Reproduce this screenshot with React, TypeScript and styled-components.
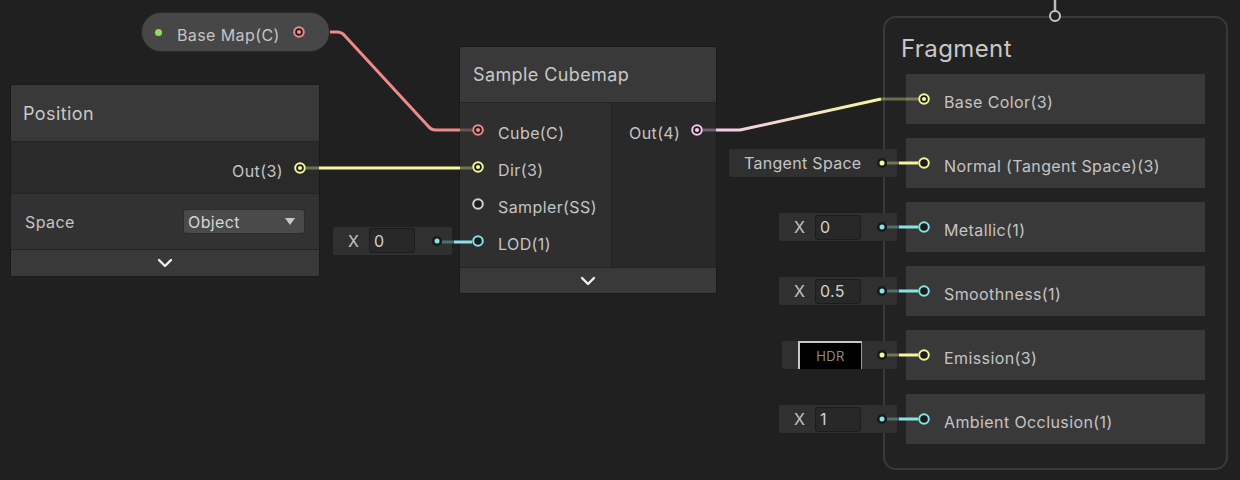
import React from "react";
import styled, { createGlobalStyle } from "styled-components";

const Global = createGlobalStyle`
  html, body { margin: 0; padding: 0; background: #202020; }
  body { font-family: Inter, "Noto Sans", sans-serif; color: #c4c4c4; overflow: hidden; letter-spacing: 0.4px; }
  * { box-sizing: border-box; }
`;

const COL = {
  red: "#f08a8a",
  yellow: "#f4f79a",
  cyan: "#84e4e7",
  pink: "#f6c6ee",
  gray: "#d2d2d2",
  green: "#92dc5c",
};

const Canvas = styled.div`
  position: relative;
  width: 1240px;
  height: 480px;
  overflow: hidden;
  background: #202020;
`;

const Wires = styled.svg`
  position: absolute;
  inset: 0;
  pointer-events: none;
  z-index: 5;
`;

const Node = styled.div<{ $x: number; $y: number; $w: number }>`
  position: absolute;
  left: ${(p) => p.$x}px;
  top: ${(p) => p.$y}px;
  width: ${(p) => p.$w}px;
  display: flex;
  flex-direction: column;
  background: #2a2a2a;
  box-shadow: 0 0 0 1px #1a1a1a;
`;

const Header = styled.div<{ $pad: number; $h: number }>`
  height: ${(p) => p.$h}px;
  display: flex;
  align-items: center;
  padding-left: ${(p) => p.$pad}px;
  background: #393939;
  color: #c8c8c8;
  font-size: 18px;
  border-bottom: 1px solid #242424;
`;

const Label = styled.span<{ $drop?: number }>`
  margin-top: ${(p) => p.$drop ?? 6}px;
  white-space: nowrap;
`;

const OutRow = styled.div`
  height: 52px;
  display: flex;
  align-items: center;
  justify-content: flex-end;
  gap: 11px;
  padding-right: 13px;
  background: #2a2a2a;
  font-size: 16px;
  border-bottom: 1px solid #242424;
`;

const FieldRow = styled.div`
  height: 56px;
  display: flex;
  align-items: center;
  justify-content: space-between;
  padding: 0 14px;
  background: #323232;
  font-size: 16px;
  border-bottom: 1px solid #242424;
`;

const Dropdown = styled.div`
  width: 122px;
  height: 25px;
  display: flex;
  align-items: center;
  justify-content: space-between;
  padding: 0 9px 0 4px;
  background: #4a4a4a;
  border: 1px solid #2c2c2c;
  border-radius: 3px;
  color: #d4d4d4;
  font-size: 16px;
`;

const Caret = styled.span`
  width: 0;
  height: 0;
  border-left: 5.5px solid transparent;
  border-right: 5.5px solid transparent;
  border-top: 7px solid #c8c8c8;
`;

const Collapse = styled.div<{ $h: number }>`
  height: ${(p) => p.$h}px;
  display: flex;
  align-items: center;
  justify-content: center;
  background: #393939;
`;

const Body = styled.div`
  height: 165px;
  display: flex;
  border-bottom: 1px solid #242424;
`;

const Inputs = styled.div`
  flex: none;
  width: 152px;
  display: flex;
  flex-direction: column;
  padding-top: 8px;
  background: #2f2f2f;
  border-right: 1px solid #252525;
`;

const Outputs = styled.div`
  flex: 1;
  min-width: 0;
  display: flex;
  flex-direction: column;
  padding-top: 8px;
  background: #292929;
`;

const SlotRow = styled.div<{ $out?: boolean }>`
  position: relative;
  height: 37px;
  display: flex;
  align-items: center;
  gap: ${(p) => (p.$out ? 0 : 14)}px;
  padding: ${(p) => (p.$out ? "0 13px 0 17px" : "0 0 0 12px")};
  justify-content: ${(p) => (p.$out ? "space-between" : "flex-start")};
  font-size: 16px;
`;

const PropertyPill = styled.div`
  position: absolute;
  left: 141px;
  top: 12px;
  width: 189px;
  height: 40px;
  display: flex;
  align-items: center;
  padding: 0 0 0 13px;
  background: #474747;
  border: 1px solid #2a2a2a;
  border-radius: 20px;
  font-size: 16px;
  z-index: 6;
`;

const ExposedDot = styled.span`
  width: 7px;
  height: 7px;
  border-radius: 50%;
  background: ${COL.green};
  margin-right: 15px;
`;

const PillLabel = styled(Label)`
  margin-right: 13px;
`;

const Fragment = styled.div`
  position: absolute;
  left: 883px;
  top: 16px;
  width: 345px;
  height: 454px;
  display: flex;
  flex-direction: column;
  border: 2px solid #393939;
  border-radius: 13px;
  background: #222222;
`;

const FragTitle = styled.div`
  height: 56px;
  display: flex;
  align-items: center;
  padding: 4px 0 0 16px;
  font-size: 24px;
  color: #c8c8c8;
`;

const BlockList = styled.div`
  display: flex;
  flex-direction: column;
  gap: 14px;
  padding: 0 21px;
`;

const Block = styled.div`
  position: relative;
  height: 50px;
  display: flex;
  align-items: center;
  gap: 14px;
  padding-left: 12px;
  background: #393939;
  font-size: 16px;
`;

const Inline = styled.div<{ $w: number; $gap: number }>`
  position: absolute;
  right: calc(100% + ${(p) => p.$gap}px);
  top: 50%;
  transform: translateY(-50%);
  width: ${(p) => p.$w}px;
  height: 28px;
  display: flex;
  align-items: center;
  padding: 0 10px 0 15px;
  background: #303030;
  border-radius: 2px;
  font-size: 16px;
  letter-spacing: 0.3px;
  z-index: 3;
`;

const XLabel = styled.span`
  width: 21px;
  color: #c4c4c4;
`;

const NumField = styled.div`
  width: 46px;
  height: 25px;
  display: flex;
  align-items: center;
  padding-left: 4px;
  background: #282828;
  border: 1px solid #1c1c1c;
  border-radius: 3px;
  color: #d2d2d2;
`;

const Swatch = styled.div`
  width: 64px;
  height: 28px;
  margin-left: 1px;
  display: flex;
  align-items: center;
  justify-content: center;
  background: #000;
  border-left: 2px solid #c8c8c8;
  border-top: 2px solid #c8c8c8;
  border-right: 1px solid #9a9a9a;
  color: #8a8a8a;
  font-size: 13px;
`;

const PushRight = styled.span`
  margin-left: auto;
  display: flex;
`;

const PortSvg = styled.svg`
  flex: none;
  display: block;
`;

const Port = ({ color, filled }: { color: string; filled?: boolean }) => (
  <PortSvg width="12" height="12" viewBox="0 0 12 12">
    <circle cx="6" cy="6" r="4.8" fill="#1c1c1c" stroke={color} strokeWidth="2" />
    {filled && <circle cx="6" cy="6" r="2.1" fill={color} />}
  </PortSvg>
);

const Dot = ({ color }: { color: string }) => (
  <PortSvg width="10" height="10" viewBox="0 0 10 10">
    <circle cx="5" cy="5" r="5" fill="#1a1a1a" />
    <circle cx="5" cy="5" r="2.5" fill={color} />
  </PortSvg>
);

const Chevron = () => (
  <PortSvg width="16" height="10" viewBox="0 0 16 10">
    <path d="M2 2 L8 8 L14 2" fill="none" stroke="#f0f0f0" strokeWidth="2.4" strokeLinecap="round" strokeLinejoin="round" />
  </PortSvg>
);

const XInline = ({ value, gap = 9, w = 118 }: { value: string; gap?: number; w?: number }) => (
  <Inline $w={w} $gap={gap}>
    <XLabel>X</XLabel>
    <NumField>{value}</NumField>
    <PushRight>
      <Dot color={COL.cyan} />
    </PushRight>
  </Inline>
);

const stubs: [number, string][] = [
  [163, COL.yellow],
  [227, COL.cyan],
  [291, COL.cyan],
  [355, COL.yellow],
  [419, COL.cyan],
];

export default function App() {
  return (
    <Canvas>
      <Global />

      <PropertyPill>
        <ExposedDot />
        <PillLabel>Base Map(C)</PillLabel>
        <Port color={COL.red} filled />
      </PropertyPill>

      <Node $x={11} $y={85} $w={308}>
        <Header $pad={12} $h={57}>Position</Header>
        <OutRow>
          <Label>Out(3)</Label>
          <Port color={COL.yellow} filled />
        </OutRow>
        <FieldRow>
          <span>Space</span>
          <Dropdown>
            <span>Object</span>
            <Caret />
          </Dropdown>
        </FieldRow>
        <Collapse $h={26}>
          <Chevron />
        </Collapse>
      </Node>

      <Node $x={460} $y={47} $w={256}>
        <Header $pad={13} $h={56}>Sample Cubemap</Header>
        <Body>
          <Inputs>
            <SlotRow>
              <Port color={COL.red} filled />
              <Label>Cube(C)</Label>
            </SlotRow>
            <SlotRow>
              <Port color={COL.yellow} filled />
              <Label>Dir(3)</Label>
            </SlotRow>
            <SlotRow>
              <Port color={COL.gray} />
              <Label>Sampler(SS)</Label>
            </SlotRow>
            <SlotRow>
              <XInline value="0" gap={8} w={119} />
              <Port color={COL.cyan} />
              <Label>LOD(1)</Label>
            </SlotRow>
          </Inputs>
          <Outputs>
            <SlotRow $out>
              <Label>Out(4)</Label>
              <Port color={COL.pink} filled />
            </SlotRow>
          </Outputs>
        </Body>
        <Collapse $h={25}>
          <Chevron />
        </Collapse>
      </Node>

      <Fragment>
        <FragTitle>Fragment</FragTitle>
        <BlockList>
          <Block>
            <Port color={COL.yellow} filled />
            <Label $drop={5}>Base Color(3)</Label>
          </Block>
          <Block>
            <Inline $w={168} $gap={9}>
              <span>Tangent Space</span>
              <PushRight>
                <Dot color={COL.yellow} />
              </PushRight>
            </Inline>
            <Port color={COL.yellow} />
            <Label $drop={5}>Normal (Tangent Space)(3)</Label>
          </Block>
          <Block>
            <XInline value="0" />
            <Port color={COL.cyan} />
            <Label $drop={5}>Metallic(1)</Label>
          </Block>
          <Block>
            <XInline value="0.5" />
            <Port color={COL.cyan} />
            <Label $drop={5}>Smoothness(1)</Label>
          </Block>
          <Block>
            <Inline $w={115} $gap={9}>
              <Swatch>HDR</Swatch>
              <PushRight>
                <Dot color={COL.yellow} />
              </PushRight>
            </Inline>
            <Port color={COL.yellow} />
            <Label $drop={5}>Emission(3)</Label>
          </Block>
          <Block>
            <XInline value="1" />
            <Port color={COL.cyan} />
            <Label $drop={5}>Ambient Occlusion(1)</Label>
          </Block>
        </BlockList>
      </Fragment>

      <Wires width="1240" height="480" viewBox="0 0 1240 480">
        <defs>
          <linearGradient id="pk" gradientUnits="userSpaceOnUse" x1="716" y1="0" x2="881" y2="0">
            <stop offset="0" stopColor={COL.pink} />
            <stop offset="1" stopColor={COL.yellow} />
          </linearGradient>
        </defs>
        <g fill="none" strokeWidth="3" strokeLinejoin="round">
          <path d="M330 32 H337 Q342 32 345 36 L428 126 Q431 130 436 130 H460" stroke={COL.red} />
          <path d="M460 130 H472" stroke={COL.red} strokeOpacity="0.35" />
          <path d="M306 168 H319" stroke={COL.yellow} strokeOpacity="0.35" />
          <path d="M319 168 H460" stroke={COL.yellow} />
          <path d="M460 168 H472" stroke={COL.yellow} strokeOpacity="0.35" />
          <path d="M442 242 H454" stroke={COL.cyan} strokeOpacity="0.35" />
          <path d="M454 242 H472" stroke={COL.cyan} />
          <path d="M703 130 H716" stroke={COL.pink} strokeOpacity="0.35" />
          <path d="M716 130 H740 L881 99" stroke="url(#pk)" />
          <path d="M881 99 H918" stroke={COL.yellow} strokeOpacity="0.35" />
          {stubs.map(([y, c]) => (
            <g key={y}>
              <path d={`M887 ${y} H899`} stroke={c} strokeOpacity="0.35" />
              <path d={`M899 ${y} H918`} stroke={c} />
            </g>
          ))}
          <path d="M1055 0 V11" stroke="#bdbdbd" strokeWidth="2.5" />
          <circle cx="1055" cy="16" r="5" fill="#222" stroke="#c4c4c4" strokeWidth="2" />
        </g>
      </Wires>
    </Canvas>
  );
}
